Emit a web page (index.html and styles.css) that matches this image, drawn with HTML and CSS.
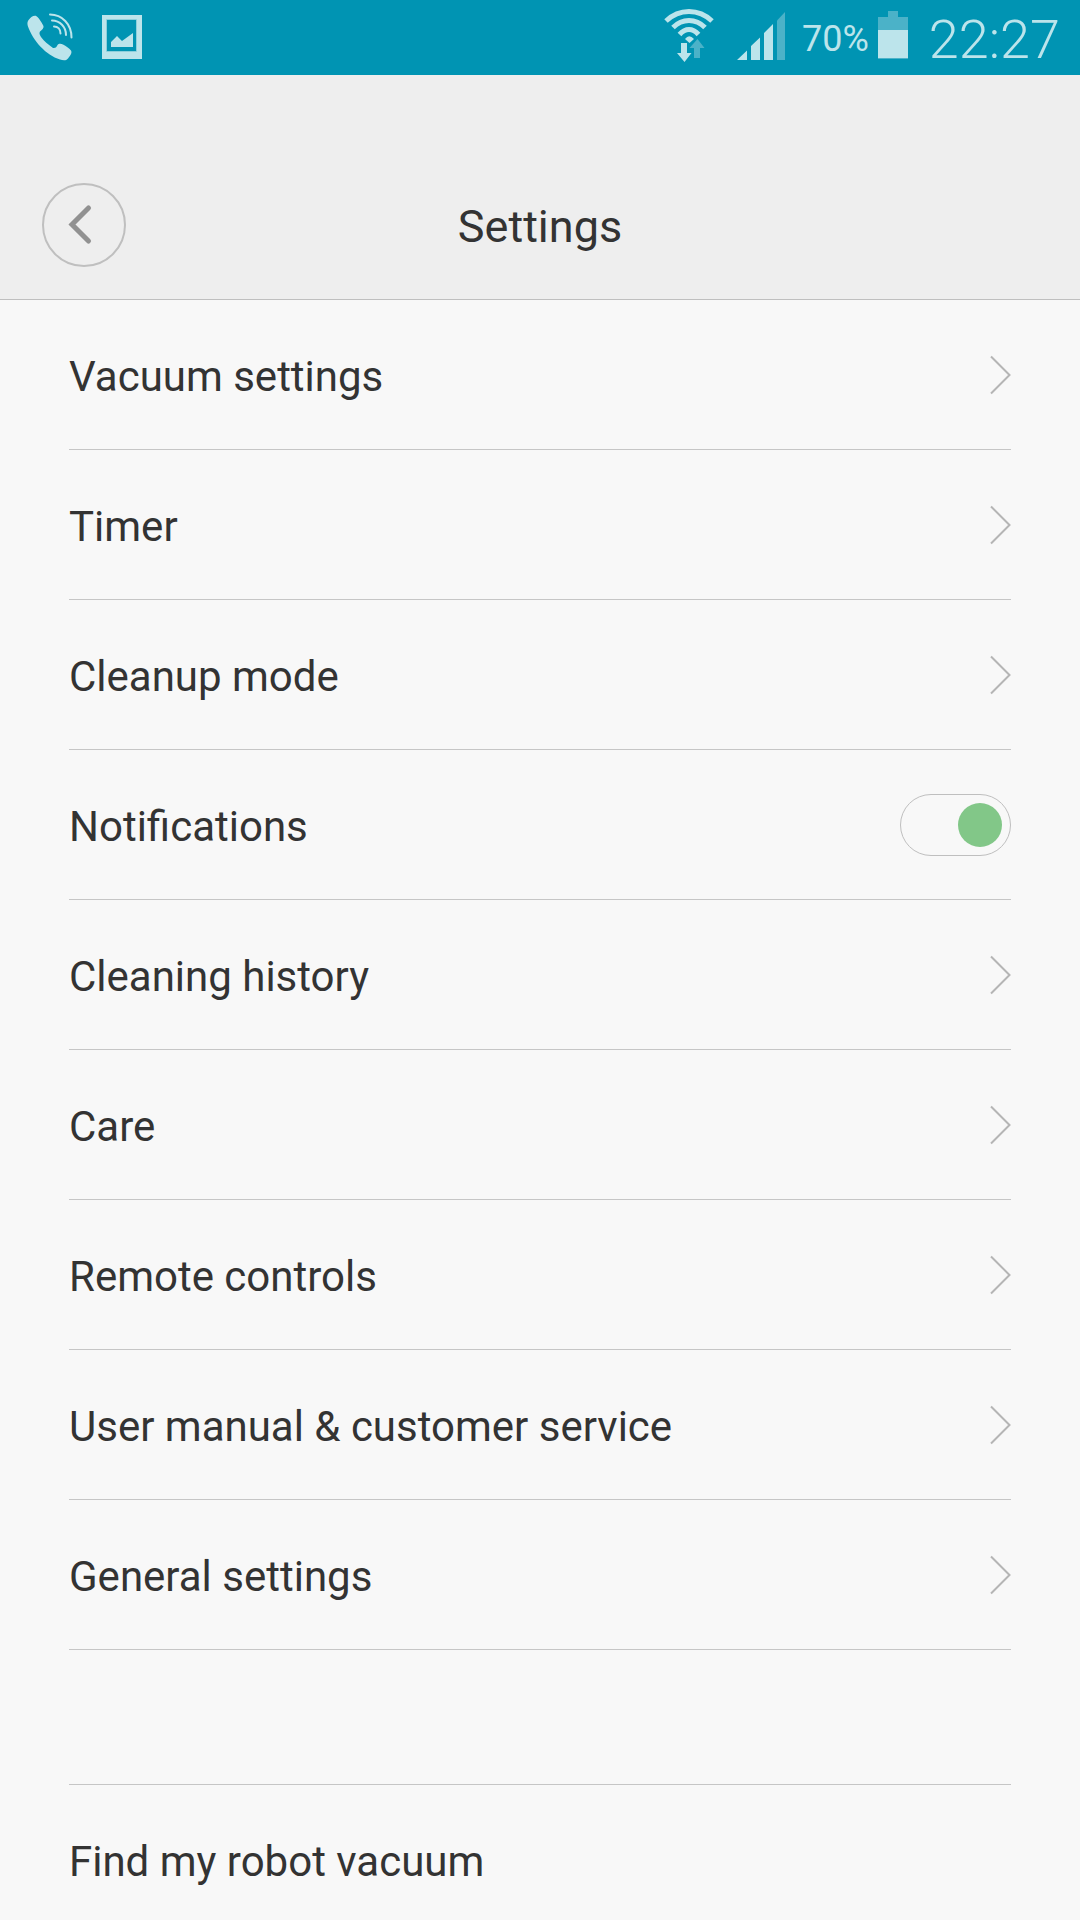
FILE: index.html
```html
<!DOCTYPE html>
<html lang="en">
<head>
<meta charset="utf-8">
<meta name="viewport" content="width=device-width, initial-scale=1">
<title>Settings</title>
<link rel="stylesheet" href="styles.css">
</head>
<body>
<svg class="symbols" aria-hidden="true">
  <symbol id="chevron" viewBox="0 0 21 40"><path d="M1 1.5 19.5 20 1 38.5" fill="none" stroke="#b5b5b5" stroke-width="2"/></symbol>
</svg>
<div class="app">
  <div class="status">
    <div class="status-group status-notices">
      <svg class="status-icon" width="48" height="75" viewBox="26 0 48 75" role="img" aria-label="Call">
        <path class="lit" d="M29 19.500C31 17 34 15 36.500 16.200C39 18 42 23 43.500 26C44 28 42 30 40 31.500C39 33 39.500 34.500 41 37C44 41 48 44.500 53 48C55.500 48.500 56.500 47 57.500 45C58.500 43.500 61 43.500 63 44.500C66 46 69 48 71 50.500C72.500 53 70 56 68 58.500C66 61 63 60.500 60 59.500C46 55 33 41 27.800 26C27 23 27.500 21 29 19.500Z"/>
        <path class="arc" d="M50 14.500C62 14.500 71.500 24 71.500 37.500M52 20.500C60 20.500 66 27 66 35M54 26.500C58 26.500 60.500 29.500 60.500 33.500"/>
      </svg>
      <svg class="status-icon" width="40" height="75" viewBox="102 0 40 75" role="img" aria-label="Screenshot saved">
        <path class="lit" fill-rule="evenodd" d="M102 15h40v44h-40ZM107 20v31h30V20Z"/>
        <path class="lit" d="M111 47v-5l6-6 5 5 11-8v14Z"/>
        <path class="edge" d="M106.500 19.500h30v32h-30Z"/>
      </svg>
    </div>
    <div class="status-group status-signals">
      <svg class="status-icon status-wifi" width="50" height="75" viewBox="664 0 50 75" role="img" aria-label="Wi-Fi">
        <path class="wave" d="M666 21Q676 11.500 689 11.500T712 21M673 27.500Q680 20.500 689 20.500T705 27.500M679.500 34.500Q684 29.500 689 29.500T698.500 34.500"/>
        <path class="lit" d="M685 39Q689 33.500 694 39L689.500 43Z"/>
        <path class="dim" d="M697.500 39 704.500 48H700v10h-6V48h-4.500Z"/>
        <path class="lit" d="M681 43h6v10h4.500L684.500 62 677 53h4Z"/>
      </svg>
      <svg class="status-icon status-cell" width="48" height="75" viewBox="737 0 48 75" role="img" aria-label="Mobile signal">
        <path class="lit" d="M737 60 747 50.500V60ZM751 60V46l9-8.500V60ZM764 60V33l9-9V60Z"/>
        <path class="dim" d="M777 60V20.500l8-8.500v48Z"/>
      </svg>
      <span class="percent">70%</span>
      <svg class="status-icon status-battery" width="30" height="75" viewBox="878 0 30 75" role="img" aria-label="Battery">
        <path class="dim" d="M878 17h10v-6h10v6h10v42h-30Z"/>
        <path class="lit" d="M878 30h30v28h-30Z"/>
      </svg>
      <time class="clock">22:27</time>
    </div>
  </div>
  <header class="header">
    <button class="back" type="button" aria-label="Back">
      <svg width="80" height="80" viewBox="2 2 80 80" aria-hidden="true"><path d="M46.500 25 30 41.500 46.500 58" fill="none" stroke="#919191" stroke-width="5" stroke-linecap="round"/></svg>
    </button>
    <h1 class="title">Settings</h1>
  </header>
  <main class="content">
    <ul class="list">
      <li><a class="row" href="#vacuum"><span class="label">Vacuum settings</span><svg class="chevron"><use href="#chevron"/></svg></a></li>
      <li><a class="row" href="#timer"><span class="label">Timer</span><svg class="chevron"><use href="#chevron"/></svg></a></li>
      <li><a class="row" href="#mode"><span class="label">Cleanup mode</span><svg class="chevron"><use href="#chevron"/></svg></a></li>
      <li class="row"><label class="label" for="notifications">Notifications</label><input class="toggle" type="checkbox" role="switch" id="notifications" checked></li>
      <li><a class="row" href="#history"><span class="label">Cleaning history</span><svg class="chevron"><use href="#chevron"/></svg></a></li>
      <li><a class="row" href="#care"><span class="label">Care</span><svg class="chevron"><use href="#chevron"/></svg></a></li>
      <li><a class="row" href="#remote"><span class="label">Remote controls</span><svg class="chevron"><use href="#chevron"/></svg></a></li>
      <li><a class="row" href="#manual"><span class="label">User manual &amp; customer service</span><svg class="chevron"><use href="#chevron"/></svg></a></li>
      <li><a class="row" href="#general"><span class="label">General settings</span><svg class="chevron"><use href="#chevron"/></svg></a></li>
    </ul>
    <ul class="list list-actions">
      <li><button class="row" type="button"><span class="label">Find my robot vacuum</span></button></li>
    </ul>
  </main>
</div>
</body>
</html>
```
FILE: styles.css
```css
* {
  box-sizing: border-box;
}

body {
  margin: 0;
  background: #f8f8f8;
  color: #333;
  font-family: Roboto, "Noto Sans", sans-serif;
}

.symbols {
  display: none;
}

.app {
  display: flex;
  flex-direction: column;
  height: 100vh;
}

/* System status bar */
.status {
  display: flex;
  justify-content: space-between;
  flex: none;
  height: 75px;
  padding: 0 20px 0 26px;
  background: #0094b3;
  color: #bce4eb;
}

.status-group {
  display: flex;
  align-items: center;
}

.status-notices {
  gap: 28px;
}

.status-icon {
  display: block;
  flex: none;
}

.status-wifi {
  margin-right: 23px;
}

.status-cell {
  margin-right: 17px;
}

.status-battery {
  margin: 0 21px 0 9px;
}

.lit {
  fill: #bce4eb;
}

.dim {
  fill: #4bb2c8;
}

.arc,
.wave,
.edge {
  fill: none;
  stroke: #bce4eb;
}

.arc {
  stroke-width: 2;
  stroke-linecap: round;
}

.wave {
  stroke-width: 5;
}

.edge {
  stroke: #8bcfdc;
  stroke-width: 1;
}

.percent {
  padding-top: 2px;
  font-size: 36px;
  line-height: 44px;
  font-weight: 400;
}

.clock {
  padding-top: 4px;
  font-size: 54px;
  line-height: 64px;
  font-weight: 300;
}

/* Page header */
.header {
  display: grid;
  grid-template-columns: 84px 1fr 84px;
  align-items: center;
  flex: none;
  padding: 108px 42px 32px;
  border-bottom: 1px solid #bfbfbf;
  background: #eee;
}

.back {
  display: grid;
  place-items: center;
  width: 84px;
  height: 84px;
  padding: 0;
  border: 2px solid #bfbfbf;
  border-radius: 50%;
  background: none;
}

.title {
  margin: 0;
  padding-top: 4px;
  font-size: 45px;
  line-height: 54px;
  font-weight: 400;
  text-align: center;
}

/* Settings list */
.content {
  flex: 1;
  min-height: 0;
  padding: 0 69px;
  overflow-y: auto;
  scrollbar-width: none;
}

.list {
  margin: 0;
  padding: 0;
  list-style: none;
}

.list-actions {
  margin-top: 134px;
  border-top: 1px solid #c6c6c6;
}

.row {
  display: flex;
  align-items: center;
  justify-content: space-between;
  width: 100%;
  height: 150px;
  padding: 0;
  border: 0;
  border-bottom: 1px solid #c6c6c6;
  background: none;
  color: inherit;
  font: inherit;
  text-decoration: none;
}

.label {
  padding-top: 4px;
  font-size: 42px;
  line-height: 50px;
}

.chevron {
  width: 21px;
  height: 40px;
}

.toggle {
  display: flex;
  align-items: center;
  justify-content: flex-end;
  width: 111px;
  height: 62px;
  margin: 0;
  padding: 0 8px;
  border: 1px solid #bfbfbf;
  border-radius: 31px;
  appearance: none;
}

.toggle::before {
  content: "";
  width: 44px;
  height: 44px;
  border-radius: 50%;
  background: #bfbfbf;
}

.toggle:not(:checked) {
  justify-content: flex-start;
}

.toggle:checked::before {
  background: #82c788;
}
```
